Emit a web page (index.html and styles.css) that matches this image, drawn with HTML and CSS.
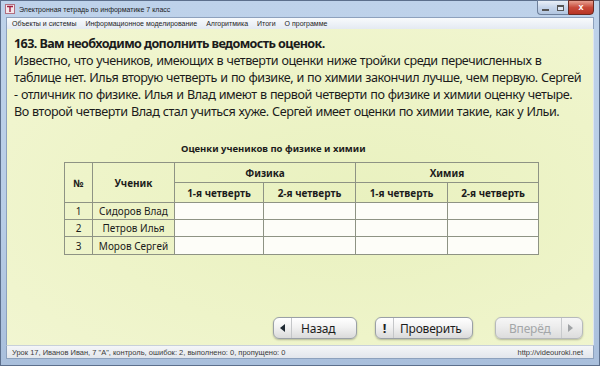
FILE: index.html
```html
<!DOCTYPE html>
<html lang="ru">
<head>
    <meta charset="UTF-8">
    <title>Электронная тетрадь по информатике 7 класс</title>
    <link rel="stylesheet" href="styles.css">
</head>
<body>
    <div class="window">
        <div class="titlebar">
            <svg class="app-icon" width="10" height="10" viewBox="0 0 10 10">
                <rect x="0.5" y="0.5" width="9" height="9" fill="#f4e6ea" stroke="#b07080"/>
                <path d="M2 2.5h6M5 2.5v5.5" stroke="#a02040" stroke-width="1.4"/>
            </svg>
            <span class="title">Электронная тетрадь по информатике 7 класс</span>
            <div class="controls">
                <div class="ctl-group">
                    <span class="ctl-min"></span>
                    <span class="ctl-max"></span>
                </div>
                <div class="ctl-close">x</div>
            </div>
        </div>

        <div class="menubar">
            <span>Объекты и системы</span>
            <span>Информационное моделирование</span>
            <span>Алгоритмика</span>
            <span>Итоги</span>
            <span>О программе</span>
        </div>

        <div class="content">
            <div class="task">
                <p class="task-title">163. Вам необходимо дополнить ведомость оценок.</p>
                <p class="task-text">Известно, что учеников, имеющих в четверти оценки ниже тройки среди перечисленных в<br>
                таблице нет. Илья вторую четверть и по физике, и по химии закончил лучше, чем первую. Сергей<br>
                - отличник по физике. Илья и Влад имеют в первой четверти по физике и химии оценку четыре.<br>
                Во второй четверти Влад стал учиться хуже. Сергей имеет оценки по химии такие, как у Ильи.</p>
            </div>

            <div class="grades">
                <p class="caption">Оценки учеников по физике и химии</p>
                <table class="grade-table">
                    <colgroup>
                        <col class="c-num"><col class="c-name">
                        <col class="c-q1"><col class="c-q2"><col class="c-q3"><col class="c-q4">
                    </colgroup>
                    <thead>
                        <tr class="h1">
                            <th rowspan="2">№</th>
                            <th rowspan="2">Ученик</th>
                            <th colspan="2">Физика</th>
                            <th colspan="2">Химия</th>
                        </tr>
                        <tr class="h2">
                            <th>1-я четверть</th>
                            <th>2-я четверть</th>
                            <th>1-я четверть</th>
                            <th>2-я четверть</th>
                        </tr>
                    </thead>
                    <tbody>
                        <tr>
                            <td>1</td><td>Сидоров Влад</td>
                            <td class="cell"></td><td class="cell"></td><td class="cell"></td><td class="cell"></td>
                        </tr>
                        <tr>
                            <td>2</td><td>Петров Илья</td>
                            <td class="cell"></td><td class="cell"></td><td class="cell"></td><td class="cell"></td>
                        </tr>
                        <tr>
                            <td>3</td><td>Моров Сергей</td>
                            <td class="cell"></td><td class="cell"></td><td class="cell"></td><td class="cell"></td>
                        </tr>
                    </tbody>
                </table>
            </div>

            <div class="nav">
                <button class="nav-btn btn-back">
                    <span class="ico"><span class="tri-left"></span></span>
                    <span class="label">Назад</span>
                </button>
                <button class="nav-btn btn-check">
                    <span class="ico bang">!</span>
                    <span class="label">Проверить</span>
                </button>
                <button class="nav-btn btn-next" disabled>
                    <span class="label">Вперёд</span>
                    <span class="ico"><span class="tri-right"></span></span>
                </button>
            </div>
        </div>

        <div class="statusbar">
            <span>Урок 17, Иванов Иван, 7 "А", контроль, ошибок: 2, выполнено: 0, пропущено: 0</span>
            <span>http://videouroki.net</span>
        </div>
    </div>
</body>
</html>
```

FILE: styles.css
```css
* {
    margin: 0;
    padding: 0;
    box-sizing: border-box;
}

body {
    width: 600px;
    height: 366px;
    overflow: hidden;
    font-family: "Liberation Sans", Arial, sans-serif;
    color: #1c1c1c;
}

/* рамка окна */
.window {
    width: 600px;
    height: 366px;
    display: flex;
    flex-direction: column;
    padding: 0 5px 6px 5px;
    background: linear-gradient(#bed2ea 0%, #b8cde6 60%, #a9bfdc 100%);
    border: 1px solid #5c6f8c;
}

.titlebar {
    height: 16px;
    display: flex;
    align-items: center;
    position: relative;
}

.app-icon {
    margin-left: -1px;
    margin-right: 4px;
}

.title {
    font-size: 7px;
    color: #1a1a1a;
}

.controls {
    position: absolute;
    right: 0;
    top: -1px;
    display: flex;
}

.ctl-group {
    width: 31px;
    height: 15px;
    display: flex;
    justify-content: space-around;
    align-items: center;
    background: linear-gradient(#eaf0f8, #c6d5ea 50%, #b2c6e0);
    border: 1px solid #6d7f9a;
    border-right: none;
    border-radius: 0 0 0 4px;
}

.ctl-min {
    width: 7px;
    height: 2px;
    background: #fff;
    border: 1px solid #555;
    margin-top: 5px;
}

.ctl-max {
    width: 7px;
    height: 6px;
    border: 1px solid #555;
    border-top-width: 2px;
    background: #dfe8f4;
}

.ctl-close {
    width: 26px;
    height: 15px;
    background: linear-gradient(#e8a090, #c84a3a 50%, #b73424);
    border: 1px solid #6a2a22;
    border-radius: 0 0 4px 0;
    color: #fff;
    font-size: 9px;
    font-weight: bold;
    text-align: center;
    line-height: 12px;
}

.menubar {
    height: 12px;
    display: flex;
    align-items: center;
    gap: 9px;
    padding-left: 5px;
    font-size: 7px;
    background: linear-gradient(#f8fafc, #e4eaf2);
    border: 1px solid #8da1bd;
    border-bottom: none;
}

/* рабочая область */
.content {
    flex: 1;
    display: flex;
    flex-direction: column;
    padding: 6px 6px 6px 6px;
    background: radial-gradient(ellipse at 60% 55%, #e9f1bf 0%, #eef4c9 55%, #f2f6d3 100%);
    border-left: 1px solid #8da1bd;
    border-right: 1px solid #dfe6ef;
    font-family: "Noto Sans", "Open Sans", sans-serif;
}

.task {
    padding-left: 1px;
    line-height: 17px;
    color: #1b1b1b;
}

.task-title {
    font-size: 12.6px;
    font-weight: bold;
    letter-spacing: -0.6px;
}

.task-text {
    font-size: 12.6px;
    letter-spacing: -0.45px;
    word-spacing: 0.5px;
}

.grades {
    margin-top: 22px;
    padding-left: 51px;
}

.caption {
    margin-left: 117px;
    font-size: 9.5px;
    font-weight: bold;
    line-height: 14px;
    margin-bottom: 6px;
}

.grade-table {
    border-collapse: collapse;
    font-size: 10px;
    text-align: center;
    color: #1c1c1c;
}

.grade-table th,
.grade-table td {
    border: 1px solid #8e9384;
    padding: 0;
}

.grade-table th {
    font-weight: bold;
}

.c-num { width: 28px; }
.c-name { width: 82px; }
.c-q1 { width: 89px; }
.c-q2 { width: 92px; }
.c-q3 { width: 92px; }
.c-q4 { width: 91px; }

.h1 th, .h2 th {
    height: 20px;
}

.grade-table tbody td {
    height: 17px;
}

.grade-table tbody tr:last-child td {
    height: 18px;
}

.grade-table .cell {
    background: #fdfdf8;
}

/* кнопки навигации */
.nav {
    margin-top: auto;
    display: flex;
    justify-content: flex-end;
    padding-right: 4px;
    gap: 18px;
}

.nav-btn {
    height: 22px;
    display: flex;
    align-items: stretch;
    border: 1px solid #9aa0a6;
    border-radius: 6px;
    background: linear-gradient(#ffffff 0%, #f2f2f2 45%, #dadada 100%);
    box-shadow: 0 1px 2px rgba(0, 0, 0, 0.25);
    font-family: "Noto Sans", "Open Sans", sans-serif;
    font-size: 12px;
    color: #1c1c1c;
    letter-spacing: -0.2px;
}

.nav-btn .ico {
    width: 18px;
    display: flex;
    align-items: center;
    justify-content: center;
}

.btn-back { width: 84px; }
.btn-check { width: 98px; }
.btn-next {
    width: 88px;
    margin-left: 4px;
    color: #a3a6a8;
    border-color: #b6b9bc;
    background: linear-gradient(#f6f6f6 0%, #ececec 45%, #dcdcdc 100%);
}

.btn-back .ico,
.btn-check .ico {
    border-right: 1px solid #c4c6c8;
}

.btn-next .ico {
    border-left: 1px solid #c8cacc;
}

.label {
    display: flex;
    align-items: center;
    padding-left: 9px;
}

.btn-check .label { padding-left: 6px; }
.btn-next .label { padding-left: 13px; width: 65px; }

.bang {
    font-weight: bold;
    font-size: 13px;
    color: #222;
}

.tri-left {
    width: 0;
    height: 0;
    border-top: 4px solid transparent;
    border-bottom: 4px solid transparent;
    border-right: 5px solid #1f2a33;
}

.tri-right {
    width: 0;
    height: 0;
    border-top: 4px solid transparent;
    border-bottom: 4px solid transparent;
    border-left: 5px solid #a0a3a6;
}

.statusbar {
    height: 14px;
    display: flex;
    justify-content: space-between;
    align-items: center;
    padding: 0 10px 0 5px;
    font-size: 7.5px;
    color: #3a3a3a;
    background: linear-gradient(#f4f6f8, #e2e6ec);
    border: 1px solid #8da1bd;
    border-top: 1px solid #c8d0da;
}
```
